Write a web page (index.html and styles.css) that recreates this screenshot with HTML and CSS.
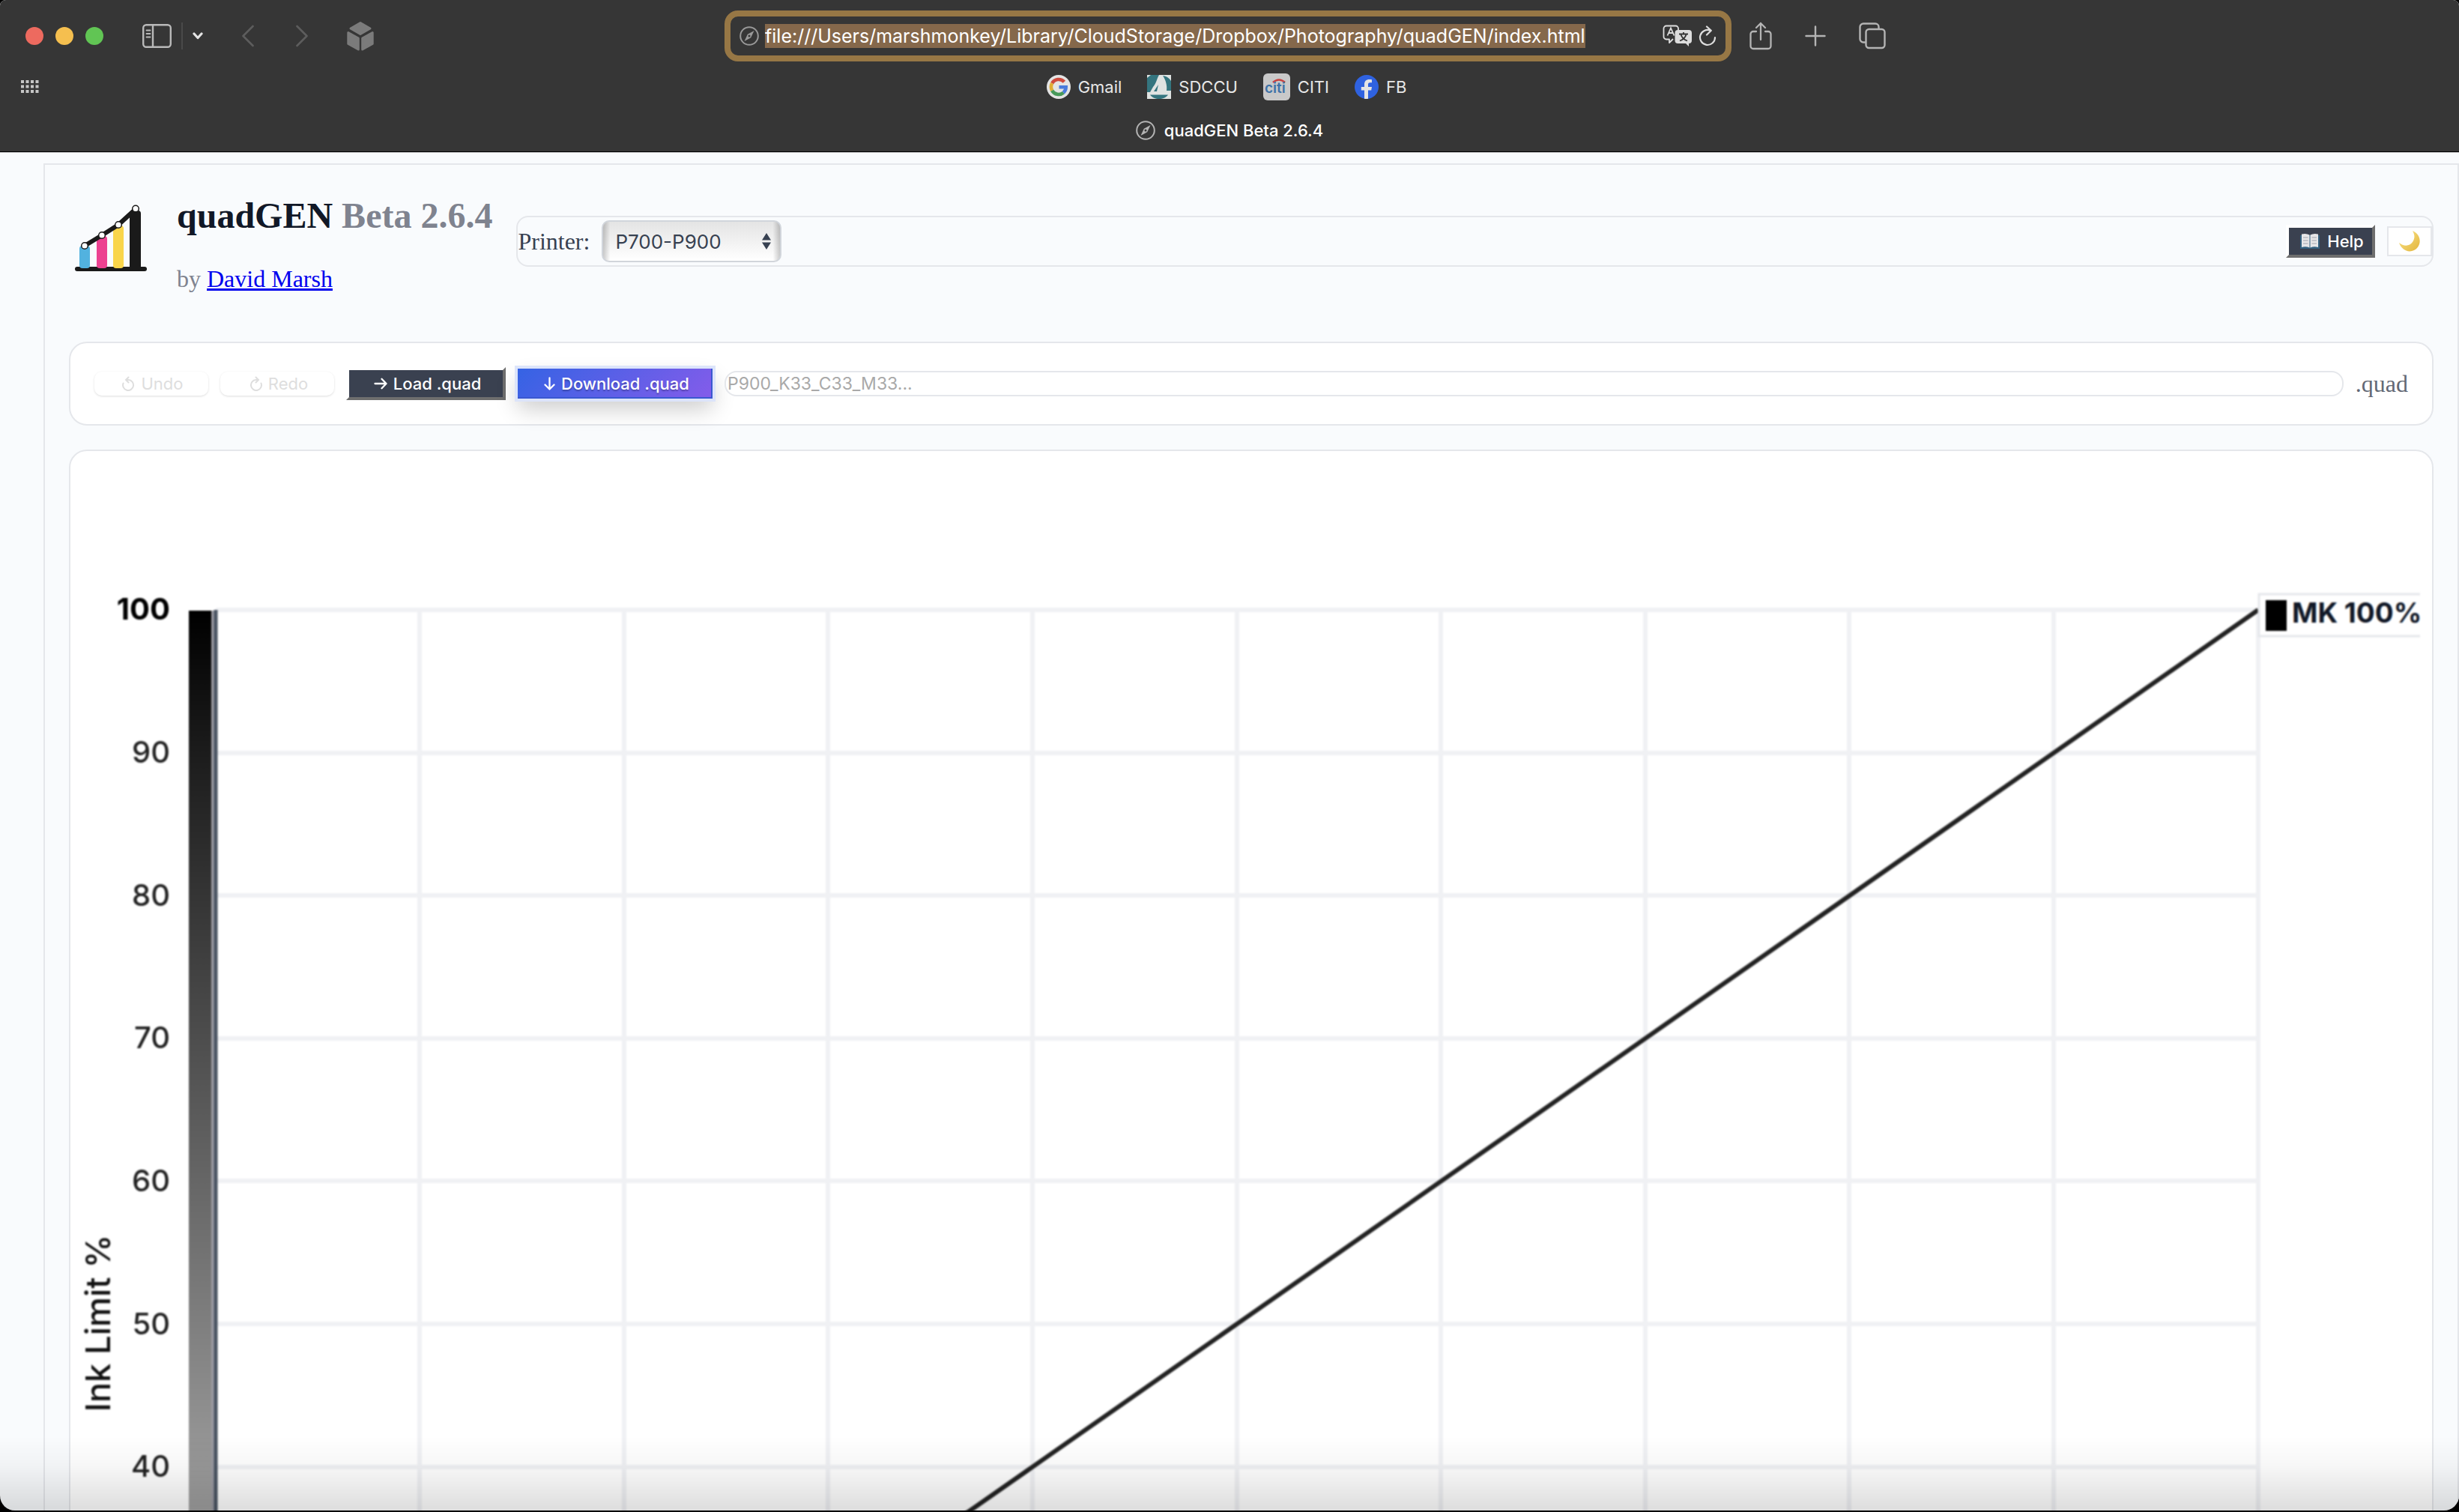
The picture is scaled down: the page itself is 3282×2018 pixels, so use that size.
FILE: index.html
```html
<!DOCTYPE html>
<html lang="en">
<head>
<meta charset="utf-8">
<title>quadGEN Beta 2.6.4</title>
<link rel="stylesheet" href="styles.css">
</head>
<body>
<div class="window">
  <header class="chrome">
    <div class="toolbar">
      <div class="tools-left">
        <div class="lights"><span class="light red"></span><span class="light yellow"></span><span class="light green"></span></div>
        <div class="side-group">
          <button class="tool" aria-label="Sidebar"><svg width="39" height="32" viewBox="0 0 39 32" fill="none" stroke="#b9b9b9" stroke-width="2.4"><rect x="1.2" y="1.2" width="36.6" height="29.6" rx="4"/><path d="M14 1v30"/><path d="M5.5 8.500h5M5.500 13h5M5.500 17.500h5" stroke-width="1.8" stroke-linecap="round"/></svg></button>
          <span class="divider"></span>
          <button class="tool" aria-label="Tab groups"><svg width="14" height="10" viewBox="0 0 14 10" fill="none" stroke="#e4e4e4" stroke-width="3.2" stroke-linecap="round" stroke-linejoin="round"><path d="M2 2l5 5.500 5-5.500"/></svg></button>
        </div>
        <div class="nav-group">
          <button class="tool" aria-label="Back"><svg width="16" height="30" viewBox="0 0 16 30" fill="none" stroke="#5d5d5d" stroke-width="2.600" stroke-linecap="round" stroke-linejoin="round"><path d="M14.500 2L1.500 15l13 13"/></svg></button>
          <button class="tool" aria-label="Forward"><svg width="16" height="30" viewBox="0 0 16 30" fill="none" stroke="#5d5d5d" stroke-width="2.600" stroke-linecap="round" stroke-linejoin="round"><path d="M1.500 2l13 13-13 13"/></svg></button>
        </div>
        <button class="tool" aria-label="Extension"><svg width="36" height="40" viewBox="0 0 36 40" fill="#7b7b7b" stroke="#7b7b7b" stroke-width="3" stroke-linejoin="round"><path d="M18 2.500L31 10 18 17.500 5 10zM1.800 15.500L15.300 23v15L1.800 30.500zM34.200 15.500L20.700 23v15l13.500-7.500z"/></svg></button>
      </div>
      <div class="address">
        <svg width="26" height="26" viewBox="0 0 26 26"><circle cx="13" cy="13" r="11.800" fill="none" stroke="#999" stroke-width="2"/><path fill="#999" fill-rule="evenodd" d="M19.500 6L15.200 15.200 6.500 20l4.300-9.200zM13 11.500a1.500 1.500 0 100 3 1.500 1.500 0 000-3z"/></svg>
        <input class="url" id="url" type="text" aria-label="Address" spellcheck="false" value="file:///Users/marshmonkey/Library/CloudStorage/Dropbox/Photography/quadGEN/index.html">
        <button class="tool" aria-label="Translate"><svg width="40" height="30" viewBox="0 0 40 30"><path d="M14 19l-5 5v-4.500H5a3.500 3.500 0 01-3.500-3.500V5A3.500 3.500 0 015 1.500h12.500A3.500 3.500 0 0121 5v2" fill="none" stroke="#ddd" stroke-width="1.800" stroke-linejoin="round"/><path d="M6.500 14.500L11 4.500l4.500 10M8.300 11h5.500" fill="none" stroke="#ddd" stroke-width="1.800"/><path d="M20.500 7h14.500a4 4 0 014 4v10a4 4 0 01-4 4v4l-4-4H20.500a4 4 0 01-4-4V11a4 4 0 014-4z" fill="#ddd"/><path d="M22 12.500h12M28 10v2.500M31.500 13c-1 4-4.500 7-8.500 8.500M24.500 13c1 4 4.500 7 8.500 8.500" fill="none" stroke="#363636" stroke-width="1.800"/></svg></button>
        <button class="tool" aria-label="Reload"><svg width="24" height="28" viewBox="0 0 24 28" fill="none" stroke="#ddd" stroke-width="2.200" stroke-linecap="round" stroke-linejoin="round"><path d="M16 6.800A10 10 0 1022 16M11 1.500l5.800 5.300L11 12.500"/></svg></button>
      </div>
      <div class="tools-right">
        <button class="tool" aria-label="Share"><svg width="30" height="38" viewBox="0 0 30 38" fill="none" stroke="#b4b4b4" stroke-width="2.300" stroke-linecap="round" stroke-linejoin="round"><path d="M9 13H5a3.500 3.500 0 00-3.500 3.500v16A3.500 3.500 0 005 36h20a3.500 3.500 0 003.500-3.500v-16A3.500 3.500 0 0025 13h-4M15 24V2M9 8l6-6 6 6"/></svg></button>
        <button class="tool" aria-label="New tab"><svg width="28" height="28" viewBox="0 0 28 28" stroke="#b4b4b4" stroke-width="2.400" stroke-linecap="round"><path d="M14 1.500v25M1.500 14h25"/></svg></button>
        <button class="tool" aria-label="Tab overview"><svg width="36" height="36" viewBox="0 0 36 36" fill="none" stroke="#b4b4b4" stroke-width="2.400"><rect x="9.500" y="9" width="25" height="25" rx="4"/><path d="M9 26.500H6A4.500 4.500 0 011.500 22V6A4.500 4.500 0 016 1.500h16A4.500 4.500 0 0126.500 6v2.500"/></svg></button>
      </div>
    </div>
    <nav class="favorites">
      <button class="tool" aria-label="Start page"><svg width="24" height="18" viewBox="0 0 24 18" fill="#c6c6c6"><path d="M0 0h4v4H0zM6.500 0h4v4h-4zM13 0h4v4h-4zM19.500 0h4v4h-4zM0 6.500h4v4H0zM6.500 6.500h4v4h-4zM13 6.500h4v4h-4zM19.500 6.500h4v4h-4zM0 13h4v4H0zM6.500 13h4v4h-4zM13 13h4v4h-4zM19.500 13h4v4h-4z"/></svg></button>
      <div class="marks">
        <a href="#" class="mark"><svg width="32" height="32" viewBox="0 0 32 32"><circle cx="16" cy="16" r="16" fill="#e4e4e4"/><g fill="none" stroke-width="4.600"><path d="M23.400 9.300A10 10 0 007.200 11.200" stroke="#cf4a3d"/><path d="M7.200 11.200a10 10 0 000 9.600" stroke="#e0ad35"/><path d="M7.200 20.800a10 10 0 0015.200 2.900" stroke="#47995a"/><path d="M22.400 23.700A10 10 0 0025.700 16.300H16.500" stroke="#4a7bdc"/></g></svg>Gmail</a>
        <a href="#" class="mark"><svg width="32" height="32" viewBox="0 0 32 32"><path fill="#dfe3e2" d="M0 0h32v32H0z"/><path fill="#34757f" d="M0 4L5 0h11c-3 5-4 12-8 16l-4 7H0zM21 1c4 6 6 13 5 20h6V8C30 5 27 2 21 1zM4 26.500h24c-3 4-7 5.500-12 5.500s-9-1.500-12-5.500zM9 22l6-9-2 9z"/></svg>SDCCU</a>
        <a href="#" class="mark citi"><svg width="36" height="36" viewBox="0 0 36 36"><rect width="36" height="36" rx="6" fill="#c9c9c9"/><path d="M13 12q8-7 16 0" fill="none" stroke="#c9423f" stroke-width="2.600"/><text x="2" y="26" font-size="19" font-weight="600" fill="#3d72a8">citi</text></svg>CITI</a>
        <a href="#" class="mark"><svg width="32" height="32" viewBox="0 0 32 32"><circle cx="16" cy="16" r="16" fill="#2f62e0"/><path fill="#e4e4e4" d="M13 31.800V20.500H8.800V16H13v-3c0-4.700 2.300-7 6.800-7 1.500 0 2.700.2 3.200.3v4h-2.200c-2.300 0-2.800 1-2.800 2.800V16h5l-.8 4.500H18v11.300q-2.500.4-5 0z"/></svg>FB</a>
      </div>
    </nav>
    <div class="tabbar"><svg width="26" height="26" viewBox="0 0 26 26"><circle cx="13" cy="13" r="11.800" fill="none" stroke="#b4b4b4" stroke-width="2"/><path fill="#b4b4b4" fill-rule="evenodd" d="M19.500 6L15.200 15.200 6.500 20l4.300-9.200zM13 11.500a1.500 1.500 0 100 3 1.500 1.500 0 000-3z"/></svg>quadGEN Beta 2.6.4</div>
  </header>

  <main class="page">
    <div class="shell">
      <header class="masthead">
        <svg class="logo" width="112" height="112" viewBox="0 0 112 112"><rect x="8" y="90" width="96" height="6" rx="3" fill="#1a1a1a"/><rect x="14" y="62" width="14" height="30" rx="4" fill="#52b2df"/><rect x="37" y="49" width="14" height="43" rx="4" fill="#ec4190"/><rect x="59" y="35" width="14" height="57" rx="4" fill="#f9d54a"/><rect x="81" y="15" width="15" height="79" rx="4" fill="#1a1a1a"/><path d="M21 62L44 48 66 34 89 13" fill="none" stroke="#1a1a1a" stroke-width="6"/><g fill="#fff" stroke="#1a1a1a" stroke-width="1.500"><circle cx="21" cy="62" r="4.300"/><circle cx="44" cy="48" r="4.300"/><circle cx="66" cy="34" r="4.300"/><circle cx="89" cy="12.500" r="4.300"/></g></svg>
        <div class="titles">
          <h1>quadGEN <span class="version">Beta 2.6.4</span></h1>
          <p class="byline">by <a href="#">David Marsh</a></p>
        </div>
        <div class="controls">
          <label for="printer">Printer:</label>
          <div class="picker">
            <select id="printer"><option>P700-P900</option></select>
            <svg width="12" height="24" viewBox="0 0 12 24" fill="#374151"><path d="M6 1l6 9.500H0zM6 23l6-9.500H0z"/></svg>
          </div>
          <button class="btn dark help"><svg width="26" height="22" viewBox="0 0 26 22"><path fill="#336180" d="M0 3h26v18H0z"/><path fill="#e6e6e8" d="M2 1.500q6-1.500 10.500 1v17q-5-2-10.500-.5zM24 1.500q-6-1.500-10.500 1v17q5-2 10.500-.5z"/><path d="M4 6h6.500M4 10h6.500M4 14h6.500M15.500 6H22M15.500 10H22M15.500 14H22" stroke="#b9bbc0" stroke-width="1.500"/></svg>Help</button>
          <button class="theme" aria-label="Dark mode"><svg width="28" height="28" viewBox="0 0 28 28"><defs><linearGradient id="moon" x1="0" y1="0" x2="1" y2="1"><stop offset="0" stop-color="#fae58c"/><stop offset="1" stop-color="#e3b53c"/></linearGradient></defs><path fill="url(#moon)" d="M18 0C30 5 31 20 20 26 12 30 3 25 0 16c6 5 14 5 18-1 3.500-5 3-10 0-15z"/></svg></button>
        </div>
      </header>

      <section class="card actions">
        <button class="btn ghost" disabled><svg width="17" height="20" viewBox="0 0 17 20" fill="none" stroke="#dedede" stroke-width="2" stroke-linecap="round"><path d="M1.500 9.500A7 7 0 108.500 5H5M8.500 1.500L5 5l3.500 3.500"/></svg>Undo</button>
        <button class="btn ghost" disabled><svg width="17" height="20" viewBox="0 0 17 20" fill="none" stroke="#dedede" stroke-width="2" stroke-linecap="round"><path d="M15.500 9.500A7 7 0 118.500 5H12M8.500 1.500L12 5 8.500 8.500"/></svg>Redo</button>
        <button class="btn dark load"><svg width="18" height="18" viewBox="0 0 18 18" fill="none" stroke="#fff" stroke-width="2.300" stroke-linecap="round" stroke-linejoin="round"><path d="M1.500 9h15M10.500 2.800L16.500 9l-6 6.200"/></svg>Load .quad</button>
        <button class="btn primary"><svg width="15" height="18" viewBox="0 0 15 18" fill="none" stroke="#fff" stroke-width="2.300" stroke-linecap="round" stroke-linejoin="round"><path d="M7.500 1.500v15M1.500 10.500l6 6 6-6"/></svg>Download .quad</button>
        <input class="filename" type="text" aria-label="File name" placeholder="P900_K33_C33_M33...">
        <span class="ext">.quad</span>
      </section>

      <section class="card chart-card">
        <svg class="chart" viewBox="0 0 3120 2300" role="img" aria-label="Ink limit chart">
          <defs><linearGradient id="ramp" gradientUnits="userSpaceOnUse" x1="0" y1="196" x2="0" y2="2102"><stop offset="0" stop-color="#000"/><stop offset=".1" stop-color="#1c1c1c"/><stop offset=".5" stop-color="#7f7f7f"/><stop offset="1" stop-color="#fff"/></linearGradient></defs>
          <g stroke="#f0f1f4" stroke-width="6">
            <path d="M178 196H2904M178 387H2904M178 577H2904M178 768H2904M178 958H2904M178 1149H2904M178 1340H2904M178 1530H2904M178 1721H2904M178 1911H2904M178 2102H2904"/>
            <path d="M450 196V2102M723 196V2102M995 196V2102M1268 196V2102M1541 196V2102M1813 196V2102M2086 196V2102M2358 196V2102M2631 196V2102M2904 196V2102"/>
          </g>
          <rect x="142" y="197" width="30" height="1905" fill="url(#ramp)"/>
          <path d="M174 197V2102" stroke="#9a9aa2" stroke-width="4"/>
          <path d="M178 196V2102" stroke="#4b5563" stroke-width="5"/>
          <path d="M178 2102L2904 196" stroke="#222" stroke-width="6"/>
          <g class="ticks" text-anchor="end">
            <text x="117" y="209" class="top">100</text><text x="117" y="400">90</text><text x="117" y="591">80</text><text x="117" y="781">70</text><text x="117" y="972">60</text><text x="117" y="1163">50</text><text x="117" y="1353">40</text>
          </g>
          <text class="axis" transform="translate(37 1148) rotate(-90)" text-anchor="middle">Ink Limit %</text>
          <svg x="2900" y="170" width="220" height="66">
            <rect x="5" y="5" width="260" height="56" fill="#fff" stroke="#e5e7eb" stroke-width="3"/>
            <rect x="14" y="13" width="28" height="41" fill="#000"/>
            <text class="series" x="49" y="43">MK 100%</text>
          </svg>
        </svg>
      </section>
    </div>
    <div class="fade"></div>
  </main>
</div>
<script src="script.js"></script>
</body>
</html>
```
FILE: styles.css
```css
* { box-sizing: border-box; }
html { height: 100%; }
body { margin: 0; height: 100%; padding-bottom: 2px; background: #000; overflow: hidden; font-family: Inter, "Liberation Sans", sans-serif; }
button { font: inherit; color: inherit; }
svg { flex: none; display: block; }

.window { height: 100%; display: flex; flex-direction: column; overflow: hidden; border-radius: 8px 8px 20px 20px; background: #f9fbfd; }

/* Browser chrome */
.chrome { flex: none; background: #363636; border-bottom: 1px solid #000; box-shadow: 0 1px 0 #c4c4c6; color: #e8e8e8; font-size: 22px; }
.toolbar { display: grid; grid-template-columns: 1fr 41% 1fr; align-items: center; height: 96px; padding-right: 4px; }
.tool { display: flex; padding: 0; border: 0; background: none; }
.tools-left { display: flex; align-items: center; gap: 52px; padding-left: 34px; }
.lights { display: flex; gap: 16px; }
.light { width: 24px; height: 24px; border-radius: 50%; }
.red { background: #ed6a5f; }
.yellow { background: #f5bf4f; }
.green { background: #61c554; }
.side-group { display: flex; align-items: center; gap: 13px; }
.divider { width: 2px; height: 36px; background: #4a4a4a; }
.nav-group { display: flex; gap: 56px; }
.address { display: flex; align-items: center; gap: 8px; height: 68px; padding: 0 12px; border: 8px solid #977745; border-radius: 18px; }
.url { flex: 1; min-width: 0; height: 32px; margin-right: 40px; padding: 0; border: 0; outline: 0; background: none; color: #fff; font: 25px/32px Inter, "Liberation Sans", sans-serif; }
.url::selection { background: #85684b; color: #fff; }
.tools-right { display: flex; align-items: center; gap: 44px; padding-left: 24px; }
.favorites { display: grid; grid-template-columns: 1fr auto 1fr; align-items: center; height: 40px; padding: 0 36px 0 28px; }
.marks { display: flex; align-items: center; gap: 34px; }
.mark { display: flex; align-items: center; gap: 10px; color: inherit; text-decoration: none; }
.tabbar { display: flex; align-items: center; justify-content: center; gap: 12px; height: 56px; margin-top: 10px; color: #fff; font-weight: 500; }

/* Page */
.page { position: relative; flex: 1; min-height: 0; overflow: hidden; padding: 15px 0 0 58px; }
.shell { padding: 0 32px 32px; border: 2px solid #e5e7eb; font: 32px/36px "Liberation Serif", serif; }
.masthead { display: flex; align-items: center; gap: 32px; min-height: 204px; margin-bottom: 32px; }
.titles { padding-top: 8px; }
h1 { margin: 0 0 44px; font-size: 48px; line-height: 48px; color: #111827; }
.version, .byline { color: #7f838f; }
.byline { margin: 0; line-height: 32px; }
.byline a { color: #00e; }
.controls { flex: 1; display: flex; align-items: center; gap: 16px; height: 68px; border: 2px solid #e5e7eb; border-radius: 16px; color: #374151; }
.picker { display: grid; align-items: center; margin-right: auto; }
.picker > * { grid-area: 1 / 1; }
.picker svg { justify-self: end; margin-right: 14px; pointer-events: none; }
select { appearance: none; width: 240px; height: 56px; padding: 0 16px; border: 2px solid #d1d5db; border-radius: 10px; background: linear-gradient(90deg, #0003, #0000 4%, #0000 96%, #0003), linear-gradient(#e4e4e4, #fff); color: #374151; font: 26px Inter, "Liberation Sans", sans-serif; }
.btn { display: flex; align-items: center; justify-content: center; gap: 8px; padding: 0 0 0 4px; font: 500 22px/28px Inter, "Liberation Sans", sans-serif; }
.dark { height: 44px; border: 4px solid; border-color: #fff #6e6e6e #6e6e6e #fff; background: #3a4150; color: #fff; }
.help { width: 119px; gap: 10px; }
.theme { display: flex; align-items: center; justify-content: center; width: 60px; height: 40px; padding: 0; border: 2px solid #e5e7eb; background: #fff; }

.card { border: 2px solid #e5e7eb; border-radius: 24px; background: #fff; }
.actions { display: flex; align-items: center; gap: 16px; height: 112px; margin-bottom: 32px; padding: 0 32px; }
.ghost { width: 152px; height: 32px; border: 0; border-radius: 10px; background: #fff; box-shadow: 0 1px 3px #0002; color: #dedede; font-weight: 400; }
.load { width: 213px; }
.primary { width: 260px; height: 40px; border: 0; background: linear-gradient(135deg, #3563e4, #845cea); box-shadow: inset -2px -2px 0 #3a58d0, 0 0 0 4px #dce4fa, 0 14px 30px #0003; color: #fff; text-shadow: 0 2px 2px #0004; }
.filename { flex: 1; min-width: 0; height: 34px; padding: 0 2px; border: 2px solid #e5e7eb; border-radius: 16px; font: 23px Inter, "Liberation Sans", sans-serif; }
.filename::placeholder { color: #a9a9a9; }
.ext { color: #636975; }

.chart-card { padding: 16px; }
.chart { width: 100%; overflow: visible; font-family: Inter, "Liberation Sans", sans-serif; filter: blur(1px); }
.ticks { font-size: 40px; font-weight: 500; fill: #222; }
.top { font-weight: 700; fill: #000; }
.axis { font-size: 45px; font-weight: 500; fill: #111; }
.series { font-size: 37px; font-weight: 700; fill: #111827; }
.citi text { font-family: Inter, "Liberation Sans", sans-serif; }

/* Shadow along the bottom edge of the window */
.fade { position: absolute; left: 0; right: 0; bottom: 0; height: 100px; pointer-events: none; background: linear-gradient(#0000, #00000008 40%, #0002); }
```
FILE: script.js
```js
const url = document.getElementById('url');
url.focus();
url.select();
```
